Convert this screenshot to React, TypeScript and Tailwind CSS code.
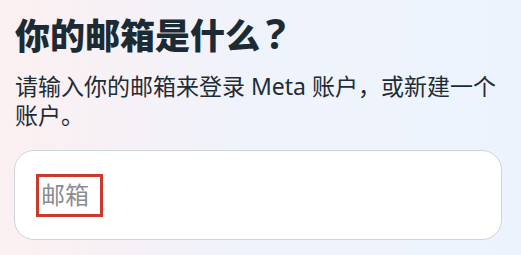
export default function App() {
  return (
    <div
      className="w-[521px] h-[255px] overflow-hidden bg-gradient-to-r from-[#fcf0f1] via-[#eff3fc] to-[#edf3fc] px-[15px] pt-[13px] text-[#1c2b33]"
      style={{ fontFamily: '"Noto Sans", "Noto Sans CJK SC", sans-serif' }}
    >
      <h1 className="flex items-baseline text-[35px] leading-[46px] font-black">
        你的邮箱是什么
        <span className="ml-[6px] text-[41px] leading-none font-bold">?</span>
      </h1>
      <p className="mt-[13px] text-[23px] leading-[29px] text-[#1f2c34]">
        请输入你的邮箱来登录 Meta 账户，或新建一个账户。
      </p>
      <div className="mt-[20px] -ml-[1px] w-[488px] h-[90px] rounded-[20px] border border-[#cfd3da] bg-white flex items-center pl-[21px]">
        <div className="border-[3px] border-[#c93a2a] pl-[2px] h-[43px] w-[67px] flex items-center">
          <span className="text-[24px] leading-none text-[#8a8d91]">邮箱</span>
        </div>
      </div>
    </div>
  )
}
